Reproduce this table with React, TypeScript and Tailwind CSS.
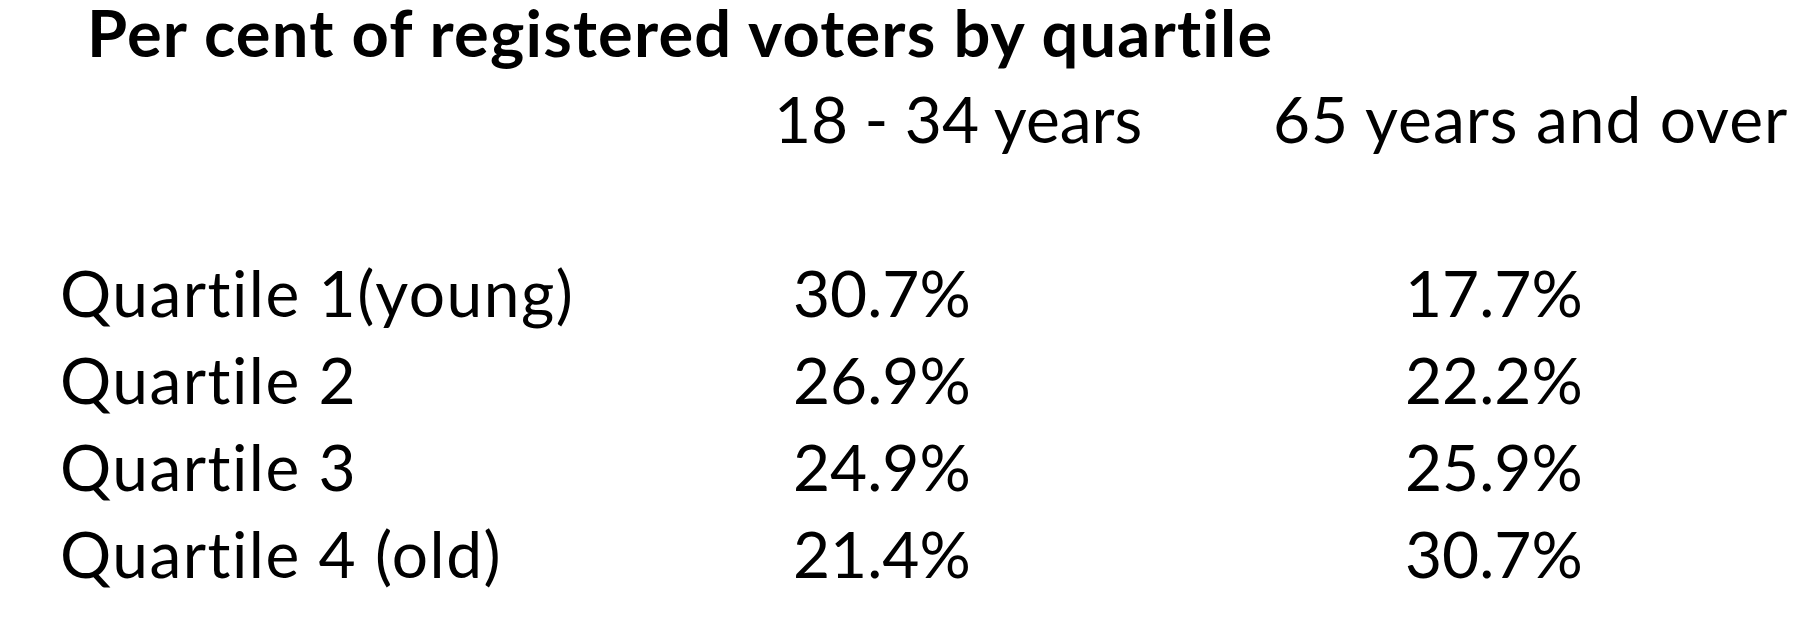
export default function App() {
  const rows = [
    { label: "Quartile 1(young)", young: "30.7%", old: "17.7%" },
    { label: "Quartile 2", young: "26.9%", old: "22.2%" },
    { label: "Quartile 3", young: "24.9%", old: "25.9%" },
    { label: "Quartile 4 (old)", young: "21.4%", old: "30.7%" },
  ];

  return (
    <div className="w-[1818px] h-[620px] bg-white text-black font-['Lato',sans-serif] overflow-hidden [font-variant-ligatures:none]">
      {/* Title */}
      <h1 className="pl-[87px] text-[65px] leading-[64px] font-bold tracking-[1.2px] whitespace-nowrap">
        Per cent of registered voters by quartile
      </h1>

      {/* Column headers */}
      <div className="mt-[11px] flex text-[64px] leading-[87px] whitespace-nowrap">
        <div className="w-[774px] shrink-0" />
        <div className="w-[499px] shrink-0">18 - 34 years</div>
        <div className="tracking-[1px]">65 years and over</div>
      </div>

      {/* Data rows */}
      <div className="mt-[87px] flex flex-col text-[64px] leading-[87px] whitespace-nowrap">
        {rows.map((r) => (
          <div key={r.label} className="flex">
            <div className="w-[793px] shrink-0 pl-[60px] tracking-[1.5px]">{r.label}</div>
            <div className="w-[612px] shrink-0">{r.young}</div>
            <div>{r.old}</div>
          </div>
        ))}
      </div>
    </div>
  );
}
